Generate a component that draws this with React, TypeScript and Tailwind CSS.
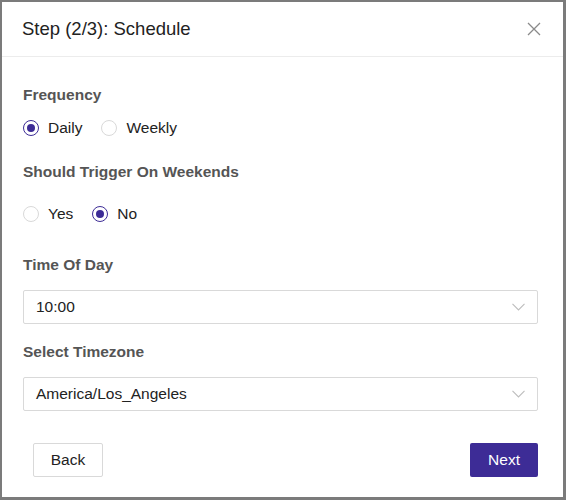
import React from "react";

function Radio({ checked, label }: { checked: boolean; label: string }) {
  return (
    <label className="flex items-center gap-[9px]">
      <span
        className={
          checked
            ? "flex h-4 w-4 items-center justify-center rounded-full border border-[#3d2c96] bg-white"
            : "flex h-4 w-4 items-center justify-center rounded-full border border-[#d9d9d9] bg-white"
        }
      >
        {checked && <span className="h-2 w-2 rounded-full bg-[#3d2c96]" />}
      </span>
      <span className="text-[15.5px] leading-5 text-[#222]">{label}</span>
    </label>
  );
}

function Chevron() {
  return (
    <svg width="13" height="8" viewBox="0 0 13 8" fill="none">
      <path d="M0.5 0.8 L6.5 7 L12.5 0.8" stroke="#bdbdbd" strokeWidth="1.1" />
    </svg>
  );
}

function Select({ value }: { value: string }) {
  return (
    <div className="flex h-[34px] items-center justify-between rounded-[2px] border border-[#d9d9d9] bg-white pl-[12px] pr-[12px]">
      <span className="text-[15.5px] text-[#222]">{value}</span>
      <Chevron />
    </div>
  );
}

export default function App() {
  return (
    <div
      className="box-border flex h-[500px] w-[566px] flex-col border-b-[3px] border-l-2 border-r-[3px] border-t-2 border-[#7b7b7b] bg-white"
      style={{ fontFamily: '"Liberation Sans", Arial, sans-serif' }}
    >
      <div className="flex h-[55px] items-center justify-between border-b border-[#ececec] pl-5 pr-[22px]">
        <h1 className="text-[18.5px] text-[#222]">Step (2/3): Schedule</h1>
        <svg width="14" height="14" viewBox="0 0 14 14">
          <path d="M1 1 L13 13 M13 1 L1 13" stroke="#8a8a8a" strokeWidth="1.3" />
        </svg>
      </div>
      <div className="flex flex-col pl-[21px] pr-[25px] pt-[28px]">
        <div className="text-[15.5px] font-bold leading-5 text-[#555]">Frequency</div>
        <div className="mt-[13px] flex items-center gap-[19px]">
          <Radio checked label="Daily" />
          <Radio checked={false} label="Weekly" />
        </div>
        <div className="mt-[24px] text-[15.5px] font-bold leading-5 text-[#555]">
          Should Trigger On Weekends
        </div>
        <div className="mt-[22px] flex items-center gap-[19px]">
          <Radio checked={false} label="Yes" />
          <Radio checked label="No" />
        </div>
        <div className="mt-[31px] text-[15.5px] font-bold leading-5 text-[#555]">Time Of Day</div>
        <div className="mt-[15px]">
          <Select value="10:00" />
        </div>
        <div className="mt-[18px] text-[15.5px] font-bold leading-5 text-[#555]">Select Timezone</div>
        <div className="mt-[15px]">
          <Select value="America/Los_Angeles" />
        </div>
        <div className="mt-[32px] flex items-center justify-between pl-[10px]">
          <button className="h-[34px] w-[70px] rounded-[2px] border border-[#d9d9d9] bg-white text-[15.5px] text-[#222]">
            Back
          </button>
          <button className="h-[34px] w-[68px] rounded-[2px] bg-[#3d2c96] text-[15.5px] text-white">
            Next
          </button>
        </div>
      </div>
    </div>
  );
}
